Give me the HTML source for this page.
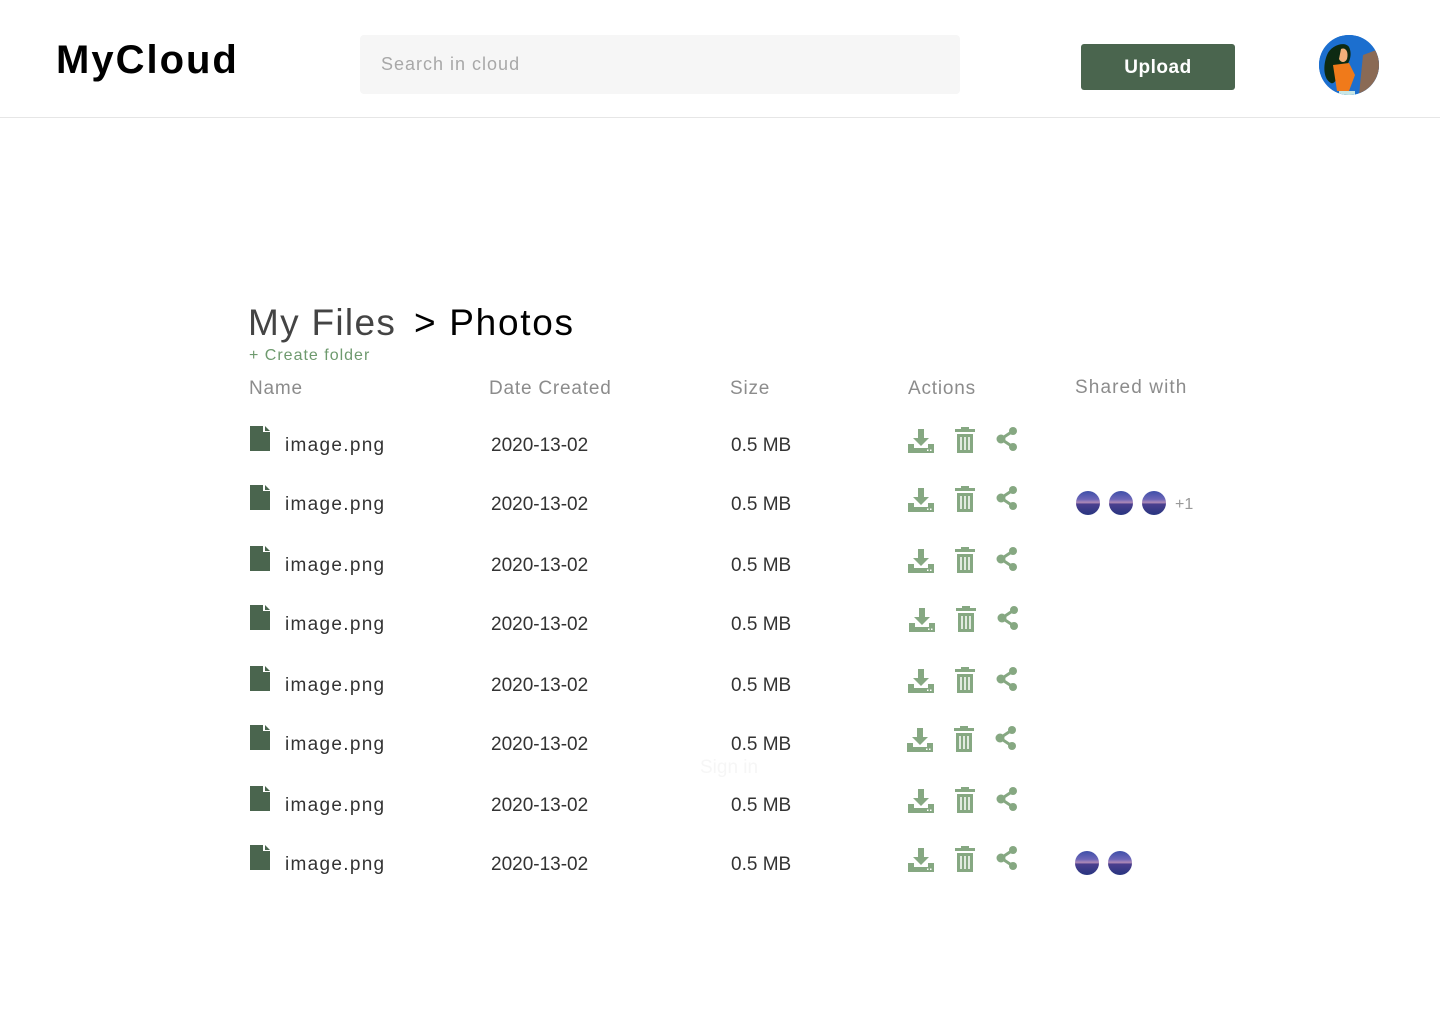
<!DOCTYPE html>
<html><head><meta charset="utf-8"><style>
*{margin:0;padding:0;box-sizing:border-box}
body{width:1440px;height:1024px;background:#fff;font-family:"Liberation Sans",sans-serif;position:relative;overflow:hidden}
.a{position:absolute}
.hdr{position:absolute;left:0;top:0;width:1440px;height:118px;border-bottom:1px solid #e6e6e6}
.logo{left:56px;top:38px;font-size:40px;font-weight:bold;color:#000;letter-spacing:2px}
.search{left:360px;top:35px;width:600px;height:59px;background:#f6f6f6;border-radius:4px;color:#a8a8a8;font-size:18px;padding:19px 21px;letter-spacing:1px}
.btn{left:1081px;top:44px;width:154px;height:46px;background:#4a654e;border-radius:3px;color:#fff;font-weight:bold;font-size:19px;text-align:center;line-height:48px;letter-spacing:0.5px}
.av{left:1319px;top:35px;width:60px;height:60px;border-radius:50%;overflow:hidden;background:#1a6fd0}
.row{position:absolute;left:0;width:1440px;height:40px}
.row .t{position:absolute;top:2px;line-height:40px;font-size:19px;color:#333}
.n{letter-spacing:1.3px}
.f{position:absolute;left:250px;top:2px}
.ic{position:absolute;top:3px}
.p{position:absolute;top:8px;width:24px;height:24px;border-radius:50%;background:linear-gradient(180deg,#3e4fa8 0%,#6d66b8 35%,#b08bb8 48%,#4a3f8e 55%,#283580 100%)}
.th{top:378px;font-size:19px;color:#8c8c8c;letter-spacing:0.8px}
</style></head><body>
<div class="hdr"></div>
<div class="a logo">MyCloud</div>
<div class="a search">Search in cloud</div>
<div class="a btn">Upload</div>
<div class="a av"><svg width="60" height="60" viewBox="0 0 60 60"><rect width="60" height="60" fill="#1c6fcf"/><path d="M44 20L60 14V60H40Z" fill="#8a6a55"/><path d="M8 20C12 10 26 6 30 12 34 20 30 30 24 34 20 40 16 50 12 48 4 44 4 30 8 20Z" fill="#0d2a12"/><path d="M14 30L30 28 36 40 30 56 18 56Z" fill="#f07a1a"/><path d="M22 14C26 12 30 16 28 24 26 28 22 28 20 24Z" fill="#f2b07a"/><path d="M20 56H36V60H20Z" fill="#c8e6e4"/></svg></div>

<div class="a" style="left:248px;top:302px;font-size:37px;color:#444;letter-spacing:1.3px">My Files</div>
<div class="a" style="left:414px;top:302px;font-size:37px;color:#000;letter-spacing:1.7px">&gt; Photos</div>
<div class="a" style="left:249px;top:347px;font-size:16px;color:#6e9a6e;letter-spacing:1px">+ Create folder</div>
<div class="a th" style="left:249px">Name</div>
<div class="a th" style="left:489px">Date Created</div>
<div class="a th" style="left:730px">Size</div>
<div class="a th" style="left:908px">Actions</div>
<div class="a th" style="left:1075px;top:377px;letter-spacing:1.1px">Shared with</div>
<div class="a" style="left:700px;top:757px;font-size:19px;color:#f6f6f6">Sign in</div>

<svg width="0" height="0" style="position:absolute"><defs>
<symbol id="file" viewBox="0 0 22 25"><path d="M0 0H13L13 6H20V25H0Z M15 0L20 5H15Z" fill="#4a654e"/></symbol>
<symbol id="dl" viewBox="0 0 26 26"><path d="M10 2H16V11H21L13 19 5 11H10Z M0 17H6V21H20V17H26V26H0Z" fill="#86a882"/><rect x="19" y="22.5" width="1.5" height="1.5" fill="#fff"/><rect x="22" y="22.5" width="1.5" height="1.5" fill="#fff"/></symbol>
<symbol id="tr" viewBox="0 0 20 26"><path d="M0 2H20V5H0Z M6 0H14V2H6Z M2 7H18V26H2Z" fill="#86a882"/><path d="M6 10V23 M10 10V23 M14 10V23" stroke="#fff" stroke-width="1.5"/></symbol>
<symbol id="sh" viewBox="0 0 22 24"><circle cx="17" cy="4" r="4" fill="#86a882"/><circle cx="5" cy="12" r="4.5" fill="#86a882"/><circle cx="17" cy="20" r="4" fill="#86a882"/><path d="M17 4L5 12 17 20" stroke="#86a882" stroke-width="3" fill="none"/></symbol>
</defs></svg>

<div class="row" style="top:424px"><svg class="f" width="22" height="25"><use href="#file"/></svg><div class="t n" style="left:285px">image.png</div><div class="t" style="left:491px">2020-13-02</div><div class="t" style="left:731px">0.5 MB</div><svg class="ic" style="left:908px" width="26" height="26"><use href="#dl"/></svg><svg class="ic" style="left:955px" width="20" height="26"><use href="#tr"/></svg><svg class="ic" style="left:996px" width="22" height="24"><use href="#sh"/></svg></div>
<div class="row" style="top:483px"><svg class="f" width="22" height="25"><use href="#file"/></svg><div class="t n" style="left:285px">image.png</div><div class="t" style="left:491px">2020-13-02</div><div class="t" style="left:731px">0.5 MB</div><svg class="ic" style="left:908px" width="26" height="26"><use href="#dl"/></svg><svg class="ic" style="left:955px" width="20" height="26"><use href="#tr"/></svg><svg class="ic" style="left:996px" width="22" height="24"><use href="#sh"/></svg><div class="p" style="left:1076px"></div><div class="p" style="left:1109px"></div><div class="p" style="left:1142px"></div><div class="t" style="left:1175px;font-size:16px;color:#999">+1</div></div>
<div class="row" style="top:544px"><svg class="f" width="22" height="25"><use href="#file"/></svg><div class="t n" style="left:285px">image.png</div><div class="t" style="left:491px">2020-13-02</div><div class="t" style="left:731px">0.5 MB</div><svg class="ic" style="left:908px" width="26" height="26"><use href="#dl"/></svg><svg class="ic" style="left:955px" width="20" height="26"><use href="#tr"/></svg><svg class="ic" style="left:996px" width="22" height="24"><use href="#sh"/></svg></div>
<div class="row" style="top:603px"><svg class="f" width="22" height="25"><use href="#file"/></svg><div class="t n" style="left:285px">image.png</div><div class="t" style="left:491px">2020-13-02</div><div class="t" style="left:731px">0.5 MB</div><svg class="ic" style="left:909px" width="26" height="26"><use href="#dl"/></svg><svg class="ic" style="left:956px" width="20" height="26"><use href="#tr"/></svg><svg class="ic" style="left:997px" width="22" height="24"><use href="#sh"/></svg></div>
<div class="row" style="top:664px"><svg class="f" width="22" height="25"><use href="#file"/></svg><div class="t n" style="left:285px">image.png</div><div class="t" style="left:491px">2020-13-02</div><div class="t" style="left:731px">0.5 MB</div><svg class="ic" style="left:908px" width="26" height="26"><use href="#dl"/></svg><svg class="ic" style="left:955px" width="20" height="26"><use href="#tr"/></svg><svg class="ic" style="left:996px" width="22" height="24"><use href="#sh"/></svg></div>
<div class="row" style="top:723px"><svg class="f" width="22" height="25"><use href="#file"/></svg><div class="t n" style="left:285px">image.png</div><div class="t" style="left:491px">2020-13-02</div><div class="t" style="left:731px">0.5 MB</div><svg class="ic" style="left:907px" width="26" height="26"><use href="#dl"/></svg><svg class="ic" style="left:954px" width="20" height="26"><use href="#tr"/></svg><svg class="ic" style="left:995px" width="22" height="24"><use href="#sh"/></svg></div>
<div class="row" style="top:784px"><svg class="f" width="22" height="25"><use href="#file"/></svg><div class="t n" style="left:285px">image.png</div><div class="t" style="left:491px">2020-13-02</div><div class="t" style="left:731px">0.5 MB</div><svg class="ic" style="left:908px" width="26" height="26"><use href="#dl"/></svg><svg class="ic" style="left:955px" width="20" height="26"><use href="#tr"/></svg><svg class="ic" style="left:996px" width="22" height="24"><use href="#sh"/></svg></div>
<div class="row" style="top:843px"><svg class="f" width="22" height="25"><use href="#file"/></svg><div class="t n" style="left:285px">image.png</div><div class="t" style="left:491px">2020-13-02</div><div class="t" style="left:731px">0.5 MB</div><svg class="ic" style="left:908px" width="26" height="26"><use href="#dl"/></svg><svg class="ic" style="left:955px" width="20" height="26"><use href="#tr"/></svg><svg class="ic" style="left:996px" width="22" height="24"><use href="#sh"/></svg><div class="p" style="left:1075px"></div><div class="p" style="left:1108px"></div></div>
</body></html>
